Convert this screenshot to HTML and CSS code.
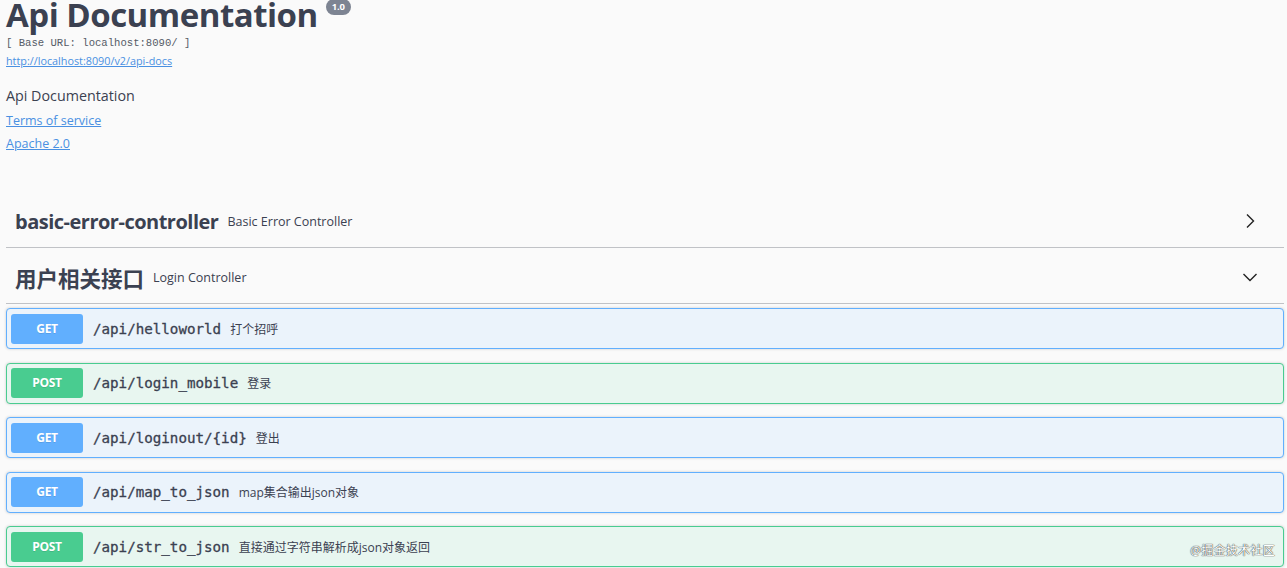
FILE: index.html
```html
<!DOCTYPE html>
<html lang="en">
  <head>
    <meta charset="UTF-8" />
    <title>Swagger UI</title>
    <link rel="stylesheet" href="styles.css">
  </head>
  <body>
    <div class="info">
      <h2 class="title">Api Documentation <span class="version">1.0</span></h2>
      <pre class="base-url">[ Base URL: localhost:8090/ ]</pre>
      <a class="url" href="#">http://localhost:8090/v2/api-docs</a>
      <p class="desc">Api Documentation</p>
      <p class="info-link"><a href="#">Terms of service</a></p>
      <p class="info-link"><a href="#">Apache 2.0</a></p>
    </div>

    <div class="tag first">
      <h4 class="tag-head">
        <span class="tag-name">basic-error-controller</span>
        <small class="tag-desc">Basic Error Controller</small>
        <svg class="arrow" width="20" height="20" viewBox="0 0 20 20"><path d="M7 3.5 L13.5 10 L7 16.5" fill="none" stroke="#222" stroke-width="1.4"/></svg>
      </h4>
    </div>

    <div class="tag">
      <h4 class="tag-head">
        <span class="tag-name cjk">用户相关接口</span>
        <small class="tag-desc">Login Controller</small>
        <svg class="arrow" width="20" height="20" viewBox="0 0 20 20"><path d="M3.5 7 L10 13.5 L16.5 7" fill="none" stroke="#222" stroke-width="1.4"/></svg>
      </h4>
    </div>

    <div class="ops">
      <div class="opblock get">
        <span class="method">GET</span>
        <span class="path">/api/helloworld</span>
        <span class="summary">打个招呼</span>
      </div>
      <div class="opblock post">
        <span class="method">POST</span>
        <span class="path">/api/login_mobile</span>
        <span class="summary">登录</span>
      </div>
      <div class="opblock get">
        <span class="method">GET</span>
        <span class="path">/api/loginout/{id}</span>
        <span class="summary">登出</span>
      </div>
      <div class="opblock get">
        <span class="method">GET</span>
        <span class="path">/api/map_to_json</span>
        <span class="summary">map集合输出json对象</span>
      </div>
      <div class="opblock post">
        <span class="method">POST</span>
        <span class="path">/api/str_to_json</span>
        <span class="summary">直接通过字符串解析成json对象返回</span>
      </div>
    </div>

    <div class="mark">@掘金技术社区</div>
  </body>
</html>
```

FILE: styles.css
```css
html {
  margin: 0;
  padding: 0;
}
body {
  margin: 0;
  padding: 0 3px 0 6px;
  background: #fafafa;
  color: #3b4151;
  font-family: "Open Sans", "Noto Sans CJK SC", sans-serif;
  overflow: hidden;
  height: 568px;
  position: relative;
}
/* 顶部信息 */
.title {
  margin: -8px 0 0;
  font-size: 33px;
  font-weight: 700;
  line-height: 46px;
  letter-spacing: -0.5px;
  color: #3b4151;
}
.version {
  position: relative;
  top: 7px;
  display: inline-block;
  margin-left: 0;
  padding: 0 6px;
  height: 16px;
  line-height: 16px;
  border-radius: 8px;
  background: #7d8492;
  color: #fff;
  font-size: 9.5px;
  font-weight: 700;
  letter-spacing: -0.2px;
  vertical-align: top;
}
.base-url {
  margin: -2px 0 0;
  font-family: "Liberation Mono", monospace;
  font-size: 10.6px;
  line-height: 14px;
  color: #555b66;
}
.url {
  display: block;
  margin-top: 4px;
  font-size: 10.8px;
  line-height: 14px;
  color: #4990e2;
}
.desc {
  margin: 18px 0 0;
  font-size: 14.3px;
  line-height: 20px;
}
.info-link {
  margin: 4.5px 0 0;
  font-size: 12.5px;
  line-height: 19px;
}
.info-link a {
  color: #4990e2;
}

/* 分组 */
.tag.first {
  margin-top: 39px;
}
.tag-head {
  display: flex;
  align-items: center;
  margin: 0;
  height: 56px;
  padding: 3px 10px 0 9px;
  border-bottom: 1px solid rgba(59, 65, 81, 0.3);
  box-sizing: border-box;
}
.tag-name {
  font-size: 20px;
  font-weight: 700;
  letter-spacing: -0.5px;
}
.tag-name.cjk {
  font-size: 21.5px;
  letter-spacing: 0;
}
.tag-desc {
  margin-left: 9px;
  font-size: 12.5px;
  font-weight: 400;
  flex: 1;
}
.arrow {
  margin-right: 14px;
}

/* 接口 */
.ops {
  padding-top: 4px;
}
.opblock {
  display: flex;
  align-items: center;
  height: 41px;
  margin-bottom: 13.5px;
  padding: 0 4px;
  border: 1px solid;
  border-radius: 4px;
  box-sizing: border-box;
  box-shadow: 0 0 3px rgba(0, 0, 0, 0.19);
}
.opblock.get {
  background: #ebf3fb;
  border-color: #61affe;
}
.opblock.post {
  background: #e8f6f0;
  border-color: #49cc90;
}
.method {
  width: 72px;
  height: 30px;
  line-height: 30px;
  border-radius: 3px;
  color: #fff;
  text-align: center;
  font-size: 12px;
  font-weight: 700;
  letter-spacing: -0.3px;
  text-shadow: 0 1px 0 rgba(0, 0, 0, 0.1);
}
.get .method {
  background: #61affe;
}
.post .method {
  background: #49cc90;
}
.path {
  margin-left: 10px;
  font-family: "DejaVu Sans Mono", monospace;
  font-size: 14.2px;
  font-weight: 400;
  -webkit-text-stroke: 0.3px #3b4151;
  color: #3b4151;
}
.summary {
  margin-left: 9px;
  font-size: 12px;
  color: #3b4151;
}

.mark {
  position: absolute;
  right: 12px;
  bottom: 9px;
  font-size: 12px;
  color: #fff;
  text-shadow: 0 0 1px #333, 0 0 1px #333;
  letter-spacing: 0.3px;
}
```
